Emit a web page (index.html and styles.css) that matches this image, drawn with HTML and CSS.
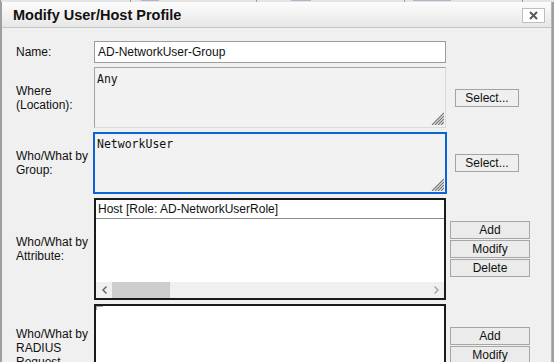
FILE: index.html
```html
<!DOCTYPE html>
<html lang="en">
<head>
    <meta charset="UTF-8">
    <title>Modify User/Host Profile</title>
    <link rel="stylesheet" href="styles.css">
</head>
<body>
    <div class="fondo-tabla">
        <span class="celda"></span>
        <span class="celda"><span class="resto r1"></span></span>
        <span class="celda"><span class="resto r2"></span></span>
        <span class="celda"><span class="resto r3"></span></span>
        <span class="celda"></span>
    </div>
    <div class="dialogo">
        <div class="barra-titulo">
            <span class="titulo">Modify User/Host Profile</span>
            <button class="cerrar" title="Close">
                <svg width="9" height="9" viewBox="0 0 9 9"><path d="M1 1 L8 8 M8 1 L1 8" stroke="#5a5a5a" stroke-width="2" fill="none"/></svg>
            </button>
        </div>
        <div class="contenido">
            <div class="formulario">
                <label class="etiqueta">Name:</label>
                <input class="campo" type="text" value="AD-NetworkUser-Group">
                <span></span>

                <label class="etiqueta">Where<br>(Location):</label>
                <div class="area-caja">
                    <textarea class="area" readonly>Any</textarea>
                    <svg class="agarre" width="13" height="13" viewBox="0 0 13 13"><path d="M13 1 L1 13 M13 4 L4 13 M13 7 L7 13 M13 10 L10 13" stroke="#777" stroke-width="1.2" fill="none"/></svg>
                </div>
                <button class="boton-select">Select...</button>

                <label class="etiqueta">Who/What by<br>Group:</label>
                <div class="area-caja">
                    <textarea class="area activa" readonly>NetworkUser</textarea>
                    <svg class="agarre" width="13" height="13" viewBox="0 0 13 13"><path d="M13 1 L1 13 M13 4 L4 13 M13 7 L7 13 M13 10 L10 13" stroke="#777" stroke-width="1.2" fill="none"/></svg>
                </div>
                <button class="boton-select">Select...</button>

                <label class="etiqueta">Who/What by<br>Attribute:</label>
                <div class="lista">
                    <div class="lista-cabecera">Host [Role: AD-NetworkUserRole]</div>
                    <div class="lista-cuerpo"></div>
                    <div class="scroll-h">
                        <span class="flecha">
                            <svg width="5" height="8" viewBox="0 0 5 8"><path d="M4.5 0.5 L1 4 L4.5 7.5" stroke="#606060" stroke-width="1.4" fill="none"/></svg>
                        </span>
                        <span class="pulgar"></span>
                        <span class="pista"></span>
                        <span class="flecha">
                            <svg width="5" height="8" viewBox="0 0 5 8"><path d="M0.5 0.5 L4 4 L0.5 7.5" stroke="#a3a3a3" stroke-width="1.4" fill="none"/></svg>
                        </span>
                    </div>
                </div>
                <div class="botones">
                    <button class="boton">Add</button>
                    <button class="boton">Modify</button>
                    <button class="boton">Delete</button>
                </div>

                <label class="etiqueta">Who/What by<br>RADIUS<br>Request<br>Attribute:</label>
                <div class="lista">
                    <div class="lista-cuerpo"><span class="marca"></span></div>
                </div>
                <div class="botones">
                    <button class="boton">Add</button>
                    <button class="boton">Modify</button>
                    <button class="boton">Delete</button>
                </div>
            </div>
        </div>
    </div>
</body>
</html>
```

FILE: styles.css
```css
body {
    margin: 0;
    padding: 0;
    width: 554px;
    height: 362px;
    overflow: hidden;
    background-color: #9f9f9f;
    font-family: "Liberation Sans", Arial, sans-serif;
    font-size: 12px;
    color: #111;
}

/* tabla que queda detras del dialogo */
.fondo-tabla {
    height: 2px;
    overflow: hidden;
    display: grid;
    grid-template-columns: 130px 126px 148px 118px 1fr;
    background-color: #e4e4e4;
}

.celda {
    border-left: 1px solid #9a9a9a;
    padding-left: 8px;
}

.resto {
    display: block;
    height: 1px;
    background-color: #b4b4c8;
}

.r1 { width: 18px; margin-left: 2px; }
.r2 { width: 20px; margin-left: 26px; }
.r3 { width: 38px; margin-left: 0; }

.dialogo {
    margin: 0 2px;
    height: 360px;
    background-color: #f0f0f0;
    border-right: 1px solid #b5b5b5;
    display: flex;
    flex-direction: column;
}

.barra-titulo {
    flex-shrink: 0;
    height: 25px;
    border-bottom: 1px solid #c4c4c4;
    background: linear-gradient(#fcfcfc, #e7e7e7);
    display: flex;
    align-items: center;
    justify-content: space-between;
    padding: 0 6px 0 11px;
}

.titulo {
    font-size: 14.5px;
    font-weight: bold;
    color: #111;
    margin-top: 1px;
}

.cerrar {
    width: 23px;
    height: 15px;
    margin-top: 2px;
    padding: 0;
    border: 1px solid #bdbdbd;
    background-color: #fff;
    display: flex;
    align-items: center;
    justify-content: center;
}

.contenido {
    flex-shrink: 0;
    padding: 13px 0 0 14px;
}

.formulario {
    display: grid;
    grid-template-columns: 74px 352px 80px;
    grid-template-rows: 22px 61px 62px 102px 102px;
    column-gap: 4px;
    row-gap: 4px;
    align-items: center;
}

.etiqueta {
    line-height: 14px;
    color: #111;
    white-space: nowrap;
}

.campo {
    box-sizing: border-box;
    width: 100%;
    height: 22px;
    margin: 0;
    padding: 0 3px;
    border: 1px solid #9c9c9c;
    background-color: #fff;
    font-family: "Liberation Sans", Arial, sans-serif;
    font-size: 12px;
    color: #111;
    outline: none;
}

.area-caja {
    position: relative;
    height: 100%;
}

.area {
    box-sizing: border-box;
    display: block;
    width: 100%;
    height: 100%;
    margin: 0;
    padding: 4px 2px;
    resize: none;
    border: 1px solid;
    border-color: #a3a3a3 #dadada #dadada #a3a3a3;
    background-color: #f2f2f2;
    font-family: "DejaVu Sans Mono", monospace;
    font-size: 11.5px;
    line-height: 14px;
    color: #111;
    outline: none;
}

.area.activa {
    height: 60px;
    margin: 1px 0;
    padding: 3px 2px;
    border: 1px solid #0a64d8;
    outline: 1px solid #0a64d8;
}

.agarre {
    position: absolute;
    right: 2px;
    bottom: 3px;
}

.boton-select {
    justify-self: start;
    margin-left: 5px;
    width: 64px;
    height: 18px;
    padding: 0;
    border: 1px solid #a3a3a3;
    background-color: #efefef;
    font-family: "Liberation Sans", Arial, sans-serif;
    font-size: 12px;
    color: #111;
}

.lista {
    box-sizing: border-box;
    height: 102px;
    border: 2px solid #1b1b1b;
    background-color: #fff;
    display: flex;
    flex-direction: column;
}

.lista-cabecera {
    height: 18px;
    line-height: 18px;
    padding-left: 2px;
    border-bottom: 1px solid #8c8c8c;
    white-space: nowrap;
}

.lista-cuerpo {
    flex: 1;
}

.marca {
    display: block;
    width: 6px;
    height: 3px;
    border-top: 1px solid #a5a5a5;
    border-left: 1px solid #a5a5a5;
}

.scroll-h {
    height: 16px;
    background-color: #f0f0f0;
    display: flex;
}

.flecha {
    width: 16px;
    display: flex;
    align-items: center;
    justify-content: center;
}

.pulgar {
    width: 58px;
    background-color: #cdcdcd;
}

.pista {
    flex: 1;
}

.botones {
    display: flex;
    flex-direction: column;
    gap: 1px;
}

.boton {
    height: 18px;
    padding: 0;
    border: 1px solid #a6a6a6;
    background-color: #ebebeb;
    font-family: "Liberation Sans", Arial, sans-serif;
    font-size: 12px;
    color: #111;
}
```
